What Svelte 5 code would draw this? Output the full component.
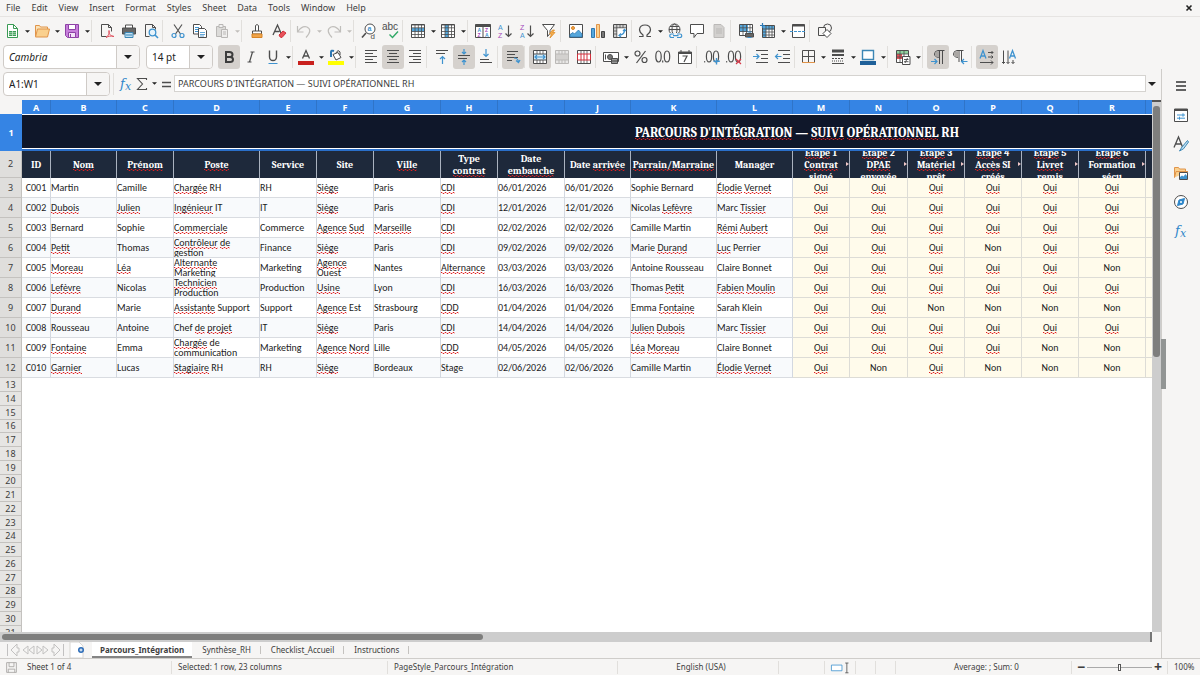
<script lang="ts">
	type Tool = { icon?: string; label?: string; arrow?: boolean; on?: boolean; off?: boolean; sep?: boolean; tight?: boolean };

	const menus = ['File', 'Edit', 'View', 'Insert', 'Format', 'Styles', 'Sheet', 'Data', 'Tools', 'Window', 'Help'];

	const icons: Record<string, string> = {
		newdoc: '<path d="M3.5 1.5h6l4 4v9h-10z" fill="#fff" stroke="#3a9b54"/><path d="M9.5 1.5v4h4" stroke="#3a9b54"/><path d="M5 8h7v5H5z" fill="#3a9b54" stroke="none"/><path d="M5 9.7h7M5 11.4h7M8.5 8v5" stroke="#cfe9d5" stroke-width=".7"/>',
		open: '<path d="M1.5 13V2.5h4l1 1.5h7V6" fill="#fbe3b8" stroke="#e0944a"/><path d="M3.5 6h12l-2 8h-12z" fill="#fad08e" stroke="#e0944a"/>',
		save: '<path d="M1.5 1.5h13v13h-11l-2-2z" fill="#c77fdb" stroke="#8e42a6"/><path d="M4.5 1.5h7v5h-7z" fill="#fff" stroke="#8e42a6"/><path d="M4.5 9.5h7v5h-7z" fill="#f3e3f7" stroke="#8e42a6"/><path d="M6.5 11v3" stroke="#8e42a6"/>',
		pdf: '<path d="M2.5 1.5h7l3 3v4M2.5 1.5v12h5M9.5 1.5v3h3"/><path d="M7 14.5c3-2 4-5 3-7-1 3 1 5 5 6-4-1-6 0-8 1z" stroke="#e0525f"/>',
		print: '<path d="M4.5 5V2h7v3" fill="#fff"/><path d="M1.5 5h13v6h-13z" fill="#666" stroke="#4d4d4d"/><path d="M4 9.5h8v5H4z" fill="#bfe0f3" stroke="#3c87b5"/><path d="M5 12h6" stroke="#3c87b5"/>',
		preview: '<path d="M2.5 1.5h7l3 3v2M2.5 1.5v12h4M9.5 1.5v3h3"/><circle cx="9.5" cy="9.5" r="3.3" fill="#e6f3fb" stroke="#3f93cf" stroke-width="1.3"/><path d="M12 12l3 3" stroke="#3f93cf" stroke-width="1.6"/>',
		cut: '<path d="M4 1.5l6.5 9.5M12 1.5L5.5 11" stroke="#555" stroke-width="1.2"/><circle cx="4" cy="12.5" r="2" stroke="#3f93cf" stroke-width="1.2"/><circle cx="12" cy="12.5" r="2" stroke="#3f93cf" stroke-width="1.2"/>',
		copy: '<path d="M1.5 1.5h6l2 2v7.5h-8z" fill="#fff"/><path d="M3 4.5h4M3 6.5h3M3 8.500h3" stroke="#3f93cf"/><path d="M6.5 5.5h6l2 2v7h-8z" fill="#fff"/><path d="M8 9.5h5M8 11.5h5M8 13h4" stroke="#3f93cf" stroke-width=".8"/>',
		paste: '<g stroke="#b9b7b5"><path d="M2.5 3.5h9v10h-9z" fill="#dcdbd9"/><path d="M5 1.5h4v3H5z" fill="#f0f0f0"/><path d="M7.5 6.5h6v8h-6z" fill="#efeeed"/><path d="M9 9h3M9 11h3"/></g>',
		brush: '<path d="M6.5 8V2.5q1.5-2 3 0V8" fill="#fff"/><path d="M3.5 8h9v3h-9z" fill="#fff"/><path d="M3 11h10v3.5H3z" fill="#f0a44a" stroke="#d88527"/>',
		clear: '<path d="M2 12L6.5 2l3.5 8M3.5 8.5h5" stroke-width="1.3"/><path d="M8 12l4-4 3 2-4 4.500q-2 .5-3-2.500z" fill="#e8525a" stroke="#d1303c"/>',
		undo: '<path d="M1.5 3v6h6M2 8.500q4-6 9-4.500 6 3-1 10.500" stroke="#c0bebb" stroke-width="1.2"/>',
		redo: '<path d="M14.5 3v6h-6M14 8.500q-4-6-9-4.500-6 3 1 10.500" stroke="#c0bebb" stroke-width="1.2"/>',
		find: '<circle cx="9" cy="6" r="5" fill="#fff"/><path d="M5 10l-4 4.5" stroke-width="1.6"/><text x="6.5" y="8" font-size="7" font-weight="700" fill="#3f93cf" stroke="none">a</text><text x="9.500" y="15.5" font-size="8" fill="#4d4d4d" stroke="none">d</text>',
		spell: '<text x="-1" y="7" font-size="10" fill="#4d4d4d" stroke="none">abc</text><path d="M6.5 11.5l3 3 5.500-6" stroke="#2fa866" stroke-width="1.4"/>',
		row: '<path d="M1.5 1.5h13v13h-13z" fill="#fff"/><path d="M2 5h12v3.5H2z" fill="#55a7dc" stroke="none"/><path d="M1.5 2h13M1.5 4.8h13M1.5 8.5h13M1.5 11.5h13M5 1.5v13M8.3 1.5v13M11.5 1.5v13" stroke-width=".8"/>',
		col: '<path d="M1.5 1.5h13v13h-13z" fill="#fff"/><path d="M5 2h3.5v12H5z" fill="#55a7dc" stroke="none"/><path d="M1.5 2h13M1.5 4.8h13M1.5 8.5h13M1.5 11.5h13M5 1.5v13M8.3 1.5v13M11.5 1.5v13" stroke-width=".8"/>',
		sort: '<path d="M.5 1.5h15v13H.5z" fill="#fff"/><path d="M.5 2h15v1.500H.5z" fill="#555"/><path d="M8 4v10.5"/><g font-size="5" font-weight="700" stroke="none"><text x="2.500" y="8.500" fill="#3f93cf">A</text><text x="2.500" y="13.800" fill="#a347ba">Z</text><text x="10" y="8.500" fill="#a347ba">Z</text><text x="10" y="13.800" fill="#3f93cf">A</text></g>',
		sortasc: '<g font-size="7" stroke="none"><text x="1" y="6.500" fill="#3f93cf">A</text><text x="1" y="15" fill="#a347ba">Z</text></g><path d="M11.5 2.500v11M8.5 10.500l3 3 3-3" stroke-width="1.2"/>',
		sortdesc: '<g font-size="7" stroke="none"><text x="1" y="6.500" fill="#a347ba">Z</text><text x="1" y="15" fill="#3f93cf">A</text></g><path d="M11.5 2.500v11M8.5 10.500l3 3 3-3" stroke-width="1.2"/>',
		filter: '<path d="M1.5 1.5h12L9 7.5v3l-2.500 3v-6z" fill="#fff"/><path d="M11.500 7L8.5 11h2l-1.500 4 5-5.500h-2.500l2-2.500z" fill="#f5b04f" stroke="#df8d2a" stroke-width=".8"/>',
		image: '<path d="M1.5 1.5h13v13h-13z" fill="#fff"/><circle cx="5" cy="5" r="1.5" fill="#f0a44a" stroke="#d88527"/><path d="M2 14v-2.500l3-2 1.500 1.500 4-4L14 11v3z" fill="#55a7dc" stroke="#2e78b3" stroke-width=".8"/>',
		chart: '<path d="M1.5 5.5h3v9h-3z" fill="#55a7dc" stroke="#2e78b3"/><path d="M6.5 1.5h3v13h-3z" fill="#fad08e" stroke="#e0944a"/><path d="M11.5 8.5h3v6h-3z" fill="#777" stroke="#444"/>',
		pivot: '<path d="M1.5 1.5h13v13h-13z" fill="#fff"/><path d="M2 2h12v3H2zM2 5h3v9H2z" fill="#cfcfcf" stroke="none"/><path d="M1.5 4.8h13M4.8 1.5v13M8 2v3M11 2v3M2 8h3M2 11h3" stroke-width=".8"/><path d="M12.500 6.500q.5 5-5.500 6M11 8l1.500-1.700L14 8M9 10.500l-2 2 2 1.500" stroke="#3f93cf" stroke-width="1.2"/>',
		omega: '<path d="M2 13.5h4V12Q2.500 9.500 2.500 6.500 3 2 8 2t5.500 4.500Q13.500 9.500 10 12v1.500h4" stroke-width="1.2"/>',
		link: '<circle cx="7.5" cy="6.5" r="5.5"/><ellipse cx="7.5" cy="6.5" rx="2.5" ry="5.5"/><path d="M2 6.500h11M3 3.500h9"/><path d="M2 10h13v5H2z" fill="#f6f5f4" stroke="none"/><path d="M7 11H4.500a1.700 1.700 0 000 3.500H7M10 11h3a1.700 1.700 0 010 3.500h-3M6 12.700h5.500" stroke="#3f93cf" stroke-width="1.2"/>',
		comment: '<path d="M1.5 1.500h13v9H8L5 14.500v-4H1.500z" fill="#fff"/>',
		header: '<path d="M3 1.500h7l3 3v10H3z" fill="#d3d1cf" stroke="#bbb9b7"/><path d="M5 6h6M5 8h6M5 10h6" stroke="#bbb9b7"/>',
		printarea: '<path d="M1.5 1.5h13v11h-13z" fill="#fff"/><path d="M2 2h8v7H2z" fill="#55a7dc" stroke="none"/><path d="M1.5 4.8h13M1.5 8.5h13M5 1.5v11M8.5 1.5v11M12 1.5v11" stroke-width=".8"/><path d="M7.5 10.5h8v3.500h-8z" fill="#666"/><path d="M9.500 9h4M9.500 14.500h4" stroke="#3f93cf"/>',
		freeze: '<path d="M2.5 2.5h12v12h-12z" fill="#fff"/><path d="M3 3h11v3.500H6V14H3z" fill="#55a7dc" stroke="none"/><path d="M2.5 6h12M2.5 9h12M2.5 12h12M6 2.5v12M9 2.5v12M12 2.5v12" stroke-width=".8"/><path d="M2.5 0v5M0 2.500h5" stroke="#2e78b3" stroke-width="1.2"/>',
		split: '<path d="M2.5 1.5h12v13h-12z" fill="#fff"/><path d="M2.5 2.5h12" stroke-width="2"/><path d="M0 8.500h16" stroke="#3f93cf" stroke-dasharray="3 1"/>',
		shapes: '<circle cx="10.500" cy="5" r="4"/><path d="M1.5 4.500h7v8h-7z" fill="#f6f5f4"/><path d="M10 6.500l4 4-4 4-4-4z" fill="#fff"/>',
		bold: '<path d="M5 3h3.500q3 0 3 2.500T8.500 8H5zM5 8h4q3 0 3 2.500T9 13H5z" stroke="#3d3d3d" stroke-width="2"/>',
		italic: '<path d="M7.500 3h4M4.500 13h4M9.500 3l-3 10" stroke-width="1.2"/>',
		underline: '<path d="M4.500 1.500V8q.2 3.500 3.500 3.500T11.500 8V1.500" stroke-width="1.4"/><path d="M3.500 14.500h9" stroke="#3f93cf"/>',
		fontcolor: '<path d="M4.500 9.500L8 1.500l3.500 8M5.700 7h4.600" stroke-width="1.3"/><path d="M0 12h16v4H0z" fill="#c9211e" stroke="none"/>',
		highlight: '<path d="M3 8V3q0-2 3-1" stroke="#2e78b3" stroke-width="2"/><path d="M5 5.500l5-2 3 5-5 2.500z" fill="#fff"/><path d="M8 4q2-4 4-1v3"/><path d="M0 12h16v4H0z" fill="#ffff00" stroke="none"/>',
		left: '<path d="M2 1.500h12M2 4.500h8M2 7.500h12M2 10.500h8M2 13.500h12"/>',
		center: '<path d="M2 1.500h12M4 4.500h8M2 7.500h12M4 10.500h8M2 13.500h12"/>',
		right: '<path d="M2 1.500h12M6 4.500h8M2 7.500h12M6 10.500h8M2 13.500h12"/>',
		top: '<path d="M2 1.500h12M2 4.500h9"/><path d="M8.500 15V7.500M6 10l2.500-2.500L11 10" stroke="#3f93cf" stroke-width="1.2"/>',
		middle: '<path d="M2 6.500h12M2 9.500h9"/><path d="M8 0v5M6 3l2 2 2-2M8 16v-5M6 13l2-2 2 2" stroke="#3f93cf" stroke-width="1.2"/>',
		bottom: '<path d="M2 10.500h9M2 13.500h12"/><path d="M8 0v7.500M5.500 5L8 7.500 10.500 5" stroke="#3f93cf" stroke-width="1.2"/>',
		wrap: '<path d="M2 2.500h11M2 5.500h8M2 8.500h11M2 11.500h5"/><path d="M9 9q4 0 4.500 4M11 11.500l2.500 2 1.500-2.500" stroke="#3f93cf" stroke-width="1.2"/>',
		merge: '<path d="M1.5 1.5h13v13h-13z" fill="#fff"/><path d="M1.5 5h13v6h-13z" fill="#d6ecf9" stroke="#4d4d4d"/><path d="M5 1.5V5M8 1.5V5M11 1.5V5M5 11v3.500M8 11v3.500M11 11v3.500" stroke-width=".8"/><path d="M3 8h10M5 6L3 8l2 2M11 6l2 2-2 2" stroke="#3f93cf" stroke-width="1.2"/>',
		mergeoff: '<g stroke="#bbb9b7"><path d="M1.5 1.5h13v13h-13z" fill="#e9e8e7"/><path d="M1.5 5h13v6h-13z" fill="#d3d1cf"/><path d="M5 1.5V5M8 1.5V5M11 1.5V5M5 11v3.500M8 11v3.500M11 11v3.500"/></g>',
		unmerge: '<path d="M1.5 1.5h13v13h-13z" fill="#fff"/><path d="M5 1.5V5M8 1.5V5M11 1.5V5M5 11v3.500M8 11v3.500M11 11v3.500" stroke-width=".8"/><path d="M1.5 5h13v6h-13zM5 5v6M8 5v6M11 5v6" fill="#fff" stroke="#d1303c"/>',
		currency: '<path d="M.5 3.500h15v9H.5z" fill="#fff"/><circle cx="7" cy="8" r="2.500" fill="#777"/><path d="M2.500 5.500v5M8.500 9.500h6v5h-6zM8.500 12h6" fill="#999"/>',
		percent: '<circle cx="4.500" cy="4.500" r="2.500" stroke-width="1.2"/><circle cx="11.500" cy="11" r="2.500" stroke-width="1.2"/><path d="M12.500 2l-9 12" stroke-width="1.2"/>',
		number: '<ellipse cx="3.500" cy="7.500" rx="2.700" ry="5.500" stroke-width="1.2"/><ellipse cx="12" cy="7.500" rx="2.700" ry="5.500" stroke-width="1.2"/><path d="M7.700 11.500v2" stroke-width="1.2"/>',
		date: '<path d="M1.5 3h13v11.500h-13z" fill="#fff"/><path d="M1.5 4h13" stroke-width="2"/><path d="M4 1v3M12 1v3"/><path d="M5.500 7h4.500l-3 6" stroke-width="1.2"/>',
		adddec: '<path d="M.7 12v1.500"/><ellipse cx="5" cy="7.500" rx="2.600" ry="5.500" stroke-width="1.2"/><ellipse cx="12" cy="7.500" rx="2.600" ry="5.500" stroke-width="1.2"/><path d="M12.500 9v6.500M9.500 12.200h6.300" stroke="#3f93cf" stroke-width="1.4"/>',
		deldec: '<path d="M.7 12v1.500"/><ellipse cx="5" cy="7.500" rx="2.600" ry="5.500" stroke-width="1.2"/><ellipse cx="12" cy="7.500" rx="2.600" ry="5.500" stroke-width="1.2"/><path d="M10 10l5 5M15 10l-5 5" stroke="#d83a4a" stroke-width="1.2"/>',
		indent: '<path d="M3 1.500h12M8 5.500h7M8 9.500h7M3 13.500h12"/><path d="M0 7.500h6M3.500 5L6 7.500 3.500 10" stroke="#3f93cf" stroke-width="1.2"/>',
		outdent: '<path d="M3 1.500h12M8 5.500h7M8 9.500h7M3 13.500h12"/><path d="M.5 7.500h6M3 5L.5 7.500 3 10" stroke="#3f93cf" stroke-width="1.2"/>',
		borders: '<path d="M2.500 13.500v-12h12v12M8.500 1.500v12M2.500 7.500h12"/><path d="M2 13.500h13" stroke="#e0944a"/>',
		linestyle: '<path d="M2 2h12" stroke-width="3"/><path d="M2 6h12" stroke-width="2"/><path d="M2 9.500h12" stroke-dasharray="2 1"/><path d="M2 12h12" stroke-dasharray="1 1"/><path d="M2 14.500h12"/>',
		bordercolor: '<path d="M2.500 1.500h11v9h-11z" fill="#fff" stroke="#3c87b5" stroke-width="1.4"/><path d="M0 12h16v4H0z" fill="#1f6099" stroke="none"/>',
		cond: '<path d="M1.5 1.5h12v12h-12z" fill="#fff"/><path d="M2 2h11v3H2z" fill="#8fd19e" stroke="none"/><path d="M2 5h5v5H2z" fill="#e8525a" stroke="none"/><path d="M1.5 5h12M1.5 8h12M5 1.5v12M9 1.5v12" stroke-width=".8"/><path d="M7.5 7.5h7.500v8H7.500z" fill="#fff"/><path d="M9 10.500h4.500M9 12.700h4.500M12.500 9l-2.500 5" stroke-width=".9"/>',
		ltr: '<path d="M9.500 15V1.500M12.500 15V1.500M14.500 1.500H8Q4.500 2 4.500 5T9 8.500"/><path d="M9 2Q5 2 5 5t4 3.500z" fill="#a9a6a3" stroke="none"/><path d="M1 12.500h6M4.500 10L7 12.500 4.500 15" stroke="#3f93cf" stroke-width="1.2"/>',
		rtl: '<path d="M7 13V1.500M9.500 13V1.500M11.500 1.500H5Q1.500 2 1.500 5T6 8.500"/><path d="M7 2Q2 2 2 5t5 3.500z" fill="#a9a6a3" stroke="none"/><path d="M15.500 12.500h-6M12 10l-2.500 2.500L12 15" stroke="#3f93cf" stroke-width="1.2"/>',
		horiz: '<path d="M1 9.500L4 1.500l3 8M2 7h4" stroke="#3f93cf" stroke-width="1.3"/><path d="M9 3.500h5M12.500 2L14 3.500 12.500 5M9 8h5M12.500 6.500L14 8l-1.500 1.500M1 13.500h13M12 11.500l2 2-2 2"/>',
		vert: '<path d="M8.500 9.500l3-8 3 8M9.500 7h4" stroke="#3f93cf" stroke-width="1.3"/><path d="M2.500 1.500v13M1 13l1.500 1.500L4 13M7 1.500v13M5.500 13L7 14.500 8.500 13M12 11v3.500M10.500 13l1.500 1.500 1.500-1.500"/>',
		fx: '<g font-family="DejaVu Serif, serif" font-style="italic" fill="#2e86c9" stroke="none"><text x="2" y="12" font-size="13">f</text><text x="7" y="14" font-size="11">x</text></g>',
		sum: '<path d="M12.500 4V2.500h-9L8.500 8l-5 5.500h9V12" stroke-width="1.1"/>',
		equals: '<path d="M4 6.500h9M4 10.500h9" stroke-width="1.6"/>',
		menu: '<path d="M3 4h10M3 8h10M3 12h10" stroke="#333" stroke-width="1.5"/>',
		properties: '<path d="M1.5 2h13v12.500h-13z" fill="#fff"/><path d="M1.5 3h13" stroke-width="2"/><path d="M4 8h8M10 6.300v3.400M4 11.200h8M6.500 9.700v3" stroke="#3f93cf"/>',
		styles: '<path d="M1 11.500L5.500 1l4 10M2.500 8h6" stroke-width="1.3"/><path d="M14.500 4.500L9 11l-2.500 4 4-2.200 5-6.800z" fill="#bfe0f3" stroke="#3c87b5"/>',
		gallery: '<path d="M1.5 12.500v-10h4l1 1.500h6V6M1.5 12.500l1.500-6h12" fill="#fad08e" stroke="#e0944a"/><path d="M6.500 7.500h8v7h-8z" fill="#fff"/><path d="M7 14v-2l2-1.500 1.500 1L12.500 9l1.500 2v3z" fill="#3f93cf" stroke="none"/>',
		navigator: '<circle cx="8" cy="8" r="6.500" fill="#fff"/><path d="M11.500 4.500L10 10l-5.500 1.500L6 6z" fill="#2e86c9" stroke="#2e86c9"/><circle cx="8" cy="8" r="1" fill="#fff" stroke="none"/>',
		first: '<path d="M2.500 2v12M12 2L6 8l6 6v-4h2V6h-2z"/>',
		prev: '<path d="M8 4L3 8l5 4zM14 4L9 8l5 4z"/>',
		next: '<path d="M2 4l5 4-5 4zM8 4l5 4-5 4z"/>',
		last: '<path d="M13.500 2v12M4 2l6 6-6 6v-4H2V6h2z"/>',
		addsheet: '<path d="M-1 0h9l4 4v12H-1z" fill="#fff" stroke="#d8d6d3"/><circle cx="10" cy="8" r="3" fill="#2b6cb8" stroke="none"/><path d="M10 6.500v3M8.500 8h3" stroke="#fff"/>',
		doc: '<path d="M2 2h12v12H2zM5 2v5h6V2M4 14v-4h8v4" stroke="#a3a19f"/>',
		selmode: '<path d="M.5 5h13v7H.5z" fill="#fff" stroke="#3f93cf"/><path d="M19.500 2.500v12M17.500 2.500h4M17.500 14.500h4"/>'
	};

	const sep: Tool = { sep: true };
	const tightSep: Tool = { sep: true, tight: true };

	const standard: Tool[] = [
		{ icon: 'newdoc', label: 'New', arrow: true },
		{ icon: 'open', label: 'Open', arrow: true },
		{ icon: 'save', label: 'Save', arrow: true },
		sep,
		{ icon: 'pdf', label: 'Export as PDF' },
		{ icon: 'print', label: 'Print' },
		{ icon: 'preview', label: 'Print Preview' },
		sep,
		{ icon: 'cut', label: 'Cut' },
		{ icon: 'copy', label: 'Copy' },
		{ icon: 'paste', label: 'Paste', arrow: true, off: true },
		sep,
		{ icon: 'brush', label: 'Clone Formatting' },
		{ icon: 'clear', label: 'Clear Formatting' },
		tightSep,
		{ icon: 'undo', label: 'Undo', arrow: true, off: true },
		{ icon: 'redo', label: 'Redo', arrow: true, off: true },
		sep,
		{ icon: 'find', label: 'Find and Replace' },
		{ icon: 'spell', label: 'Spelling' },
		sep,
		{ icon: 'row', label: 'Row', arrow: true },
		{ icon: 'col', label: 'Column', arrow: true },
		sep,
		{ icon: 'sort', label: 'Sort' },
		{ icon: 'sortasc', label: 'Sort Ascending' },
		{ icon: 'sortdesc', label: 'Sort Descending' },
		{ icon: 'filter', label: 'AutoFilter' },
		sep,
		{ icon: 'image', label: 'Image' },
		{ icon: 'chart', label: 'Chart' },
		{ icon: 'pivot', label: 'Pivot Table' },
		tightSep,
		{ icon: 'omega', label: 'Special Character', arrow: true },
		{ icon: 'link', label: 'Hyperlink' },
		{ icon: 'comment', label: 'Comment' },
		{ icon: 'header', label: 'Headers and Footers', off: true },
		sep,
		{ icon: 'printarea', label: 'Print Area' },
		{ icon: 'freeze', label: 'Freeze Rows and Columns', arrow: true },
		{ icon: 'split', label: 'Split Window' },
		sep,
		{ icon: 'shapes', label: 'Draw Functions' }
	];

	const formatting: Tool[] = [
		{ icon: 'bold', label: 'Bold', on: true },
		{ icon: 'italic', label: 'Italic' },
		{ icon: 'underline', label: 'Underline', arrow: true },
		tightSep,
		{ icon: 'fontcolor', label: 'Font Color', arrow: true },
		{ icon: 'highlight', label: 'Background Color', arrow: true },
		sep,
		{ icon: 'left', label: 'Align Left' },
		{ icon: 'center', label: 'Center Horizontally', on: true },
		{ icon: 'right', label: 'Align Right' },
		sep,
		{ icon: 'top', label: 'Align Top' },
		{ icon: 'middle', label: 'Center Vertically', on: true },
		{ icon: 'bottom', label: 'Align Bottom' },
		sep,
		{ icon: 'wrap', label: 'Wrap Text', on: true },
		sep,
		{ icon: 'merge', label: 'Merge and Center', on: true },
		{ icon: 'mergeoff', label: 'Merge Cells', off: true },
		{ icon: 'unmerge', label: 'Unmerge Cells' },
		sep,
		{ icon: 'currency', label: 'Currency', arrow: true },
		{ icon: 'percent', label: 'Percent' },
		{ icon: 'number', label: 'Number' },
		{ icon: 'date', label: 'Date' },
		sep,
		{ icon: 'adddec', label: 'Add Decimal Place' },
		{ icon: 'deldec', label: 'Delete Decimal Place' },
		sep,
		{ icon: 'indent', label: 'Increase Indent' },
		{ icon: 'outdent', label: 'Decrease Indent' },
		tightSep,
		{ icon: 'borders', label: 'Borders', arrow: true },
		{ icon: 'linestyle', label: 'Border Style', arrow: true },
		{ icon: 'bordercolor', label: 'Border Color', arrow: true },
		sep,
		{ icon: 'cond', label: 'Conditional', arrow: true },
		sep,
		{ icon: 'ltr', label: 'Left-To-Right', on: true },
		{ icon: 'rtl', label: 'Right-To-Left' },
		sep,
		{ icon: 'horiz', label: 'Text direction left to right', on: true },
		{ icon: 'vert', label: 'Text direction top to bottom' }
	];

	const panels = ['menu', 'properties', 'styles', 'gallery', 'navigator', 'fx'];

	// words followed by ~ are flagged by the spell checker
	const columns = [
		{ letter: 'A', width: 29, title: 'ID' },
		{ letter: 'B', width: 66, title: 'Nom~' },
		{ letter: 'C', width: 57, title: 'Prénom~' },
		{ letter: 'D', width: 86, title: 'Poste~' },
		{ letter: 'E', width: 57, title: 'Service' },
		{ letter: 'F', width: 57, title: 'Site' },
		{ letter: 'G', width: 67, title: 'Ville~' },
		{ letter: 'H', width: 57, title: 'Type contrat~' },
		{ letter: 'I', width: 67, title: 'Date embauche~' },
		{ letter: 'J', width: 66, title: 'Date arrivée~' },
		{ letter: 'K', width: 86, title: 'Parrain/Marraine~' },
		{ letter: 'L', width: 76, title: 'Manager' },
		{ letter: 'M', width: 57, title: 'Étape~ 1|Contrat~|signé~', step: true },
		{ letter: 'N', width: 58, title: 'Étape~ 2|DPAE~|envoyée~', step: true },
		{ letter: 'O', width: 57, title: 'Étape~ 3|Matériel~|prêt~', step: true },
		{ letter: 'P', width: 57, title: 'Étape~ 4|Accès~ SI|créés~', step: true },
		{ letter: 'Q', width: 57, title: 'Étape~ 5|Livret~|remis~', step: true },
		{ letter: 'R', width: 67, title: 'Étape~ 6|Formation|sécu~', step: true },
		{ letter: '', width: 426, title: '' }
	];
	const tableWidth = columns.reduce((sum, c) => sum + c.width, 22);

	const people = [
		['C001', 'Martin', 'Camille', 'Chargée~ RH', 'RH', 'Siège~', 'Paris', 'CDI~', '06/01/2026', 'Sophie Bernard', 'Élodie~ Vernet~', 'OOOOOO'],
		['C002', 'Dubois~', 'Julien~', 'Ingénieur~ IT', 'IT', 'Siège~', 'Paris', 'CDI~', '12/01/2026', 'Nicolas Lefèvre~', 'Marc Tissier~', 'OOOOOO'],
		['C003', 'Bernard', 'Sophie', 'Commerciale~', 'Commerce', 'Agence~ Sud~', 'Marseille~', 'CDI~', '02/02/2026', 'Camille Martin', 'Rémi~ Aubert~', 'OOOOOO'],
		['C004', 'Petit~', 'Thomas', 'Contrôleur~ de~ gestion~', 'Finance', 'Siège~', 'Paris', 'CDI~', '09/02/2026', 'Marie Durand~', 'Luc~ Perrier', 'OOONOO'],
		['C005', 'Moreau~', 'Léa~', 'Alternante~ Marketing', 'Marketing', 'Agence~ Ouest~', 'Nantes', 'Alternance~', '03/03/2026', 'Antoine Rousseau', 'Claire Bonnet', 'OOOOON'],
		['C006', 'Lefèvre~', 'Nicolas', 'Technicien~ Production', 'Production', 'Usine~', 'Lyon', 'CDI~', '16/03/2026', 'Thomas Petit~', 'Fabien~ Moulin~', 'OOOOOO'],
		['C007', 'Durand~', 'Marie', 'Assistante~ Support', 'Support', 'Agence~ Est', 'Strasbourg', 'CDD~', '01/04/2026', 'Emma Fontaine~', 'Sarah Klein', 'OONNNN'],
		['C008', 'Rousseau', 'Antoine', 'Chef de~ projet~', 'IT', 'Siège~', 'Paris', 'CDI~', '14/04/2026', 'Julien~ Dubois~', 'Marc Tissier~', 'OOOOOO'],
		['C009', 'Fontaine~', 'Emma', 'Chargée~ de communication', 'Marketing', 'Agence~ Nord~', 'Lille', 'CDD~', '04/05/2026', 'Léa~ Moreau~', 'Claire Bonnet', 'OOOONN'],
		['C010', 'Garnier~', 'Lucas', 'Stagiaire~ RH', 'RH', 'Siège~', 'Bordeaux', 'Stage', '02/06/2026', 'Camille Martin', 'Élodie~ Vernet~', 'ONONNN']
	];

	const rows = people.map((p) => [
		...p.slice(0, 9),
		p[8],
		p[9],
		p[10],
		...[...p[11]].map((s) => (s === 'O' ? 'Oui~' : 'Non')),
		''
	]);

	const emptyRows = Array.from({ length: 19 }, (_, i) => i + 13);
	const tabs = ['Parcours_Intégration', 'Synthèse_RH', 'Checklist_Accueil', 'Instructions'];

	let activeTab = $state(0);
	let zoom = $state(50);

	function words(text: string) {
		return text.split(' ').map((w) => ({ text: w.replace('~', ''), bad: w.endsWith('~') }));
	}
</script>

{#snippet icon(name: string)}
	<svg class="icon" viewBox="0 0 16 16" fill="none" stroke="#4d4d4d" aria-hidden="true">{@html icons[name]}</svg>
{/snippet}

{#snippet arrow()}
	<svg class="caret" viewBox="0 0 8 4" aria-hidden="true"><path d="M0 0h8L4 4z" fill="currentColor" /></svg>
{/snippet}

{#snippet spelled(text: string)}
	{#each words(text) as w, i}{i ? ' ' : ''}<span class:bad={w.bad}>{w.text}</span>{/each}
{/snippet}

{#snippet tools(list: Tool[])}
	{#each list as t}
		{#if t.sep}
			<span class="sep" class:tight={t.tight}></span>
		{:else}
			<button class="tool" class:on={t.on} disabled={t.off} aria-label={t.label}>{@render icon(t.icon ?? '')}</button>
			{#if t.arrow}
				<button class="drop" disabled={t.off} aria-label="{t.label} options">{@render arrow()}</button>
			{/if}
		{/if}
	{/each}
{/snippet}

<div class="window">
	<nav class="menubar">
		{#each menus as m}
			<button>{m}</button>
		{/each}
		<button class="close" aria-label="Close document">
			<svg viewBox="0 0 8 8"><path d="M1.5 1.5l5 5M6.5 1.5l-5 5" stroke="#222" stroke-width="1.6" /></svg>
		</button>
	</nav>

	<div class="toolbar">{@render tools(standard)}</div>

	<div class="toolbar formatting">
		<div class="combo font">
			<input aria-label="Font name" value="Cambria" />
			<button aria-label="Choose font">{@render arrow()}</button>
		</div>
		<div class="combo size">
			<input aria-label="Font size" value="14 pt" />
			<button aria-label="Choose size">{@render arrow()}</button>
		</div>
		{@render tools(formatting)}
	</div>

	<div class="body">
		<div class="main">
			<div class="formula">
				<div class="combo name">
					<input aria-label="Name box" value="A1:W1" />
					<button aria-label="Manage names">{@render arrow()}</button>
				</div>
				<span class="sep"></span>
				<button class="fn" aria-label="Function wizard">{@render icon('fx')}</button>
				<button class="fn" aria-label="Select function">{@render icon('sum')}</button>
				<button class="drop" aria-label="Select function options">{@render arrow()}</button>
				<button class="fn" aria-label="Formula">{@render icon('equals')}</button>
				<input class="line" aria-label="Input line" value="PARCOURS D'INTÉGRATION — SUIVI OPÉRATIONNEL RH" />
				<button class="expand" aria-label="Expand formula bar">{@render arrow()}</button>
			</div>

			<div class="grid">
				<div class="sheet">
					<table style="width: {tableWidth}px">
						<colgroup>
							<col style="width: 22px" />
							{#each columns as c}
								<col style="width: {c.width}px" />
							{/each}
						</colgroup>
						<thead>
							<tr>
								<td class="corner"></td>
								{#each columns as c}
									<th class="letter">{c.letter}</th>
								{/each}
							</tr>
						</thead>
						<tbody>
							<tr class="title">
								<th class="num selected">1</th>
								<td colspan={columns.length}>
									{@render spelled("PARCOURS~ D'INTÉGRATION~ — SUIVI~ OPÉRATIONNEL~ RH")}
								</td>
							</tr>
							<tr class="heads">
								<th class="num">2</th>
								{#each columns as c}
									<td>
										<div class="clip">
											{#if c.step}
												{#each c.title.split('|') as part}
													<div>{@render spelled(part)}</div>
												{/each}
											{:else}
												<div>{@render spelled(c.title)}</div>
											{/if}
										</div>
										{#if c.step}<i class="more"></i>{/if}
									</td>
								{/each}
							</tr>
							{#each rows as r, i}
								<tr class="person">
									<th class="num">{i + 3}</th>
									{#each r as value, j}
										<td class:step={j > 11} class:id={j === 0}>
											<div class="clip"><div>{@render spelled(value)}</div></div>
										</td>
									{/each}
								</tr>
							{/each}
							{#each emptyRows as n}
								<tr class="empty">
									<th class="num">{n}</th>
								</tr>
							{/each}
						</tbody>
					</table>
				</div>
				<div class="vscroll"><div class="thumb"></div></div>
			</div>

			<div class="hscroll"><div class="thumb"></div></div>

			<div class="tabs">
				<div class="tabnav">
					{#each ['first', 'prev', 'next', 'last'] as n}
						<button disabled aria-label="{n} sheet">{@render icon(n)}</button>
					{/each}
				</div>
				<button class="add" aria-label="Add sheet">{@render icon('addsheet')}</button>
				{#each tabs as t, i}
					<button class="tab" class:active={i === activeTab} onclick={() => (activeTab = i)}>{t}</button>
				{/each}
			</div>
		</div>

		<aside class="sidebar">
			<span class="handle"></span>
			{#each panels as p}
				<button aria-label={p}>{@render icon(p)}</button>
			{/each}
		</aside>
	</div>

	<footer class="status">
		<span class="pad">{@render icon('doc')}</span>
		<span>Sheet 1 of 4</span>
		<span class="rule">Selected: 1 row, 23 columns</span>
		<span class="rule">PageStyle_Parcours_Intégration</span>
		<span class="rule mid">English (USA)</span>
		<span class="rule"></span>
		<span class="rule mode">{@render icon('selmode')}</span>
		<span class="rule"></span>
		<span class="rule"></span>
		<span class="rule mid">Average: ; Sum: 0</span>
		<span class="rule zoom">
			<button aria-label="Zoom out">−</button>
			<input type="range" aria-label="Zoom" min="0" max="100" bind:value={zoom} />
			<button aria-label="Zoom in">+</button>
		</span>
		<span class="rule">100%</span>
	</footer>
</div>

<style>
	:global(body) {
		background: #f6f5f4;
	}
	.window {
		display: flex;
		flex-direction: column;
		height: 100vh;
		overflow: hidden;
		background: #f6f5f4;
		color: #3d3d3d;
		font: 9px/14px 'Noto Sans', sans-serif;
	}
	.window * {
		box-sizing: border-box;
	}
	button,
	input {
		margin: 0;
		padding: 0;
		border: 0;
		background: none;
		color: inherit;
		font: inherit;
	}
	button {
		display: flex;
		align-items: center;
		justify-content: center;
	}
	.icon {
		width: 16px;
		height: 16px;
		flex: none;
		overflow: visible;
		font-family: 'Liberation Sans', sans-serif;
	}
	.caret {
		width: 5px;
		height: 3px;
		color: #222;
	}

	.menubar {
		display: flex;
		align-items: center;
		gap: 11px;
		height: 17px;
		padding: 0 7px 0 6px;
		border-bottom: 1px solid #e6e4e2;
	}
	.menubar .close {
		width: 8px;
		height: 8px;
		margin-left: auto;
	}

	.toolbar {
		display: flex;
		align-items: center;
		height: 28px;
		padding-left: 1px;
	}
	.formatting {
		height: 24px;
		padding-left: 3px;
	}
	.tool {
		width: 22px;
		height: 24px;
		flex: none;
		border-radius: 3px;
	}
	.tool.on {
		background: #d5d1cd;
	}
	.drop {
		width: 8px;
		height: 24px;
		flex: none;
	}
	.drop:disabled .caret {
		color: #c0bebb;
	}
	.sep {
		width: 5px;
		height: 22px;
		flex: none;
		border-left: 1px solid #e1dfdc;
	}
	.sep.tight {
		width: 3px;
	}

	.combo {
		display: flex;
		height: 24px;
		flex: none;
		border: 1px solid #cfcbc7;
		border-radius: 4px;
		background: #fff;
		color: #222;
		font-size: 10px;
	}
	.combo input {
		flex: 1;
		min-width: 0;
		padding-left: 5px;
	}
	.combo button {
		width: 23px;
		border-left: 1px solid #cfcbc7;
		border-radius: 0 3px 3px 0;
		background: #f6f5f4;
	}
	.combo .caret,
	.expand .caret {
		width: 8px;
		height: 4px;
	}
	.font {
		width: 137px;
		margin-right: 6px;
		font-style: italic;
	}
	.size {
		width: 67px;
		margin-right: 5px;
	}
	.name {
		width: 107px;
		margin-right: 3px;
	}

	.body {
		display: flex;
		flex: 1;
		min-height: 0;
	}
	.main {
		display: flex;
		flex: 1;
		flex-direction: column;
		min-width: 0;
	}
	.formula {
		display: flex;
		align-items: center;
		height: 31px;
		padding: 0 4px 2px 3px;
	}
	.fn {
		width: 16px;
		height: 22px;
		flex: none;
	}
	.line {
		flex: 1;
		height: 17px;
		min-width: 0;
		padding-left: 3px;
		border: 1px solid #d5d3d0;
		background: #fff;
	}
	.expand {
		width: 11px;
		height: 22px;
	}

	.grid {
		display: flex;
		flex: 1;
		min-height: 0;
	}
	.sheet {
		flex: 1;
		min-width: 0;
		overflow: hidden;
		background: #fff;
	}
	table {
		table-layout: fixed;
		border-spacing: 0;
	}
	td,
	th {
		padding: 0;
	}
	.corner {
		background: #f6f5f4;
	}
	.letter {
		height: 14px;
		border-right: 1px solid #2f74c8;
		background: #3584e4;
		color: #fff;
		font-weight: 700;
		line-height: 13px;
	}
	.num {
		border-right: 1px solid #c4c2bf;
		border-bottom: 1px solid #c4c2bf;
		background: #dfdedc;
		font-weight: 400;
		line-height: 12px;
	}
	.num.selected {
		border: 0;
		background: #3584e4;
		color: #fff;
		font-weight: 700;
	}
	.title {
		height: 37px;
	}
	.title td {
		border-top: 1px solid #fff;
		background: #0f172a;
		box-shadow: inset 0 -2px #2a6fc9, inset 0 -3px #fff;
		color: #fff;
		font: 700 13px/16px Caladea, 'DejaVu Serif Condensed', 'DejaVu Serif', serif;
		text-align: center;
	}
	.clip {
		display: flex;
		flex-direction: column;
		justify-content: center;
		overflow: hidden;
	}
	.heads td {
		position: relative;
		border-right: 1px solid #aab2bf;
		background: #1e293b;
		color: #fff;
		font: 700 10px/12px Caladea, 'DejaVu Serif Condensed', 'DejaVu Serif', serif;
		text-align: center;
	}
	.heads .clip {
		height: 27px;
	}
	.more {
		position: absolute;
		top: 11px;
		right: 0;
		border: 2px solid transparent;
		border-right: 0;
		border-left: 3px solid #f0c8c8;
	}
	.person td {
		border-right: 1px solid #d3d8e0;
		border-bottom: 1px solid #d9dce1;
		background: #fff;
		color: #1c1c1c;
		font: 10px/10px Carlito, Lato, sans-serif;
	}
	.person:nth-child(even) td {
		background: #f8fafc;
	}
	.person td.step {
		border-color: #dddcd6;
		background: #fffbeb;
		text-align: center;
	}
	.person .id {
		text-align: center;
	}
	.person .clip {
		height: 19px;
	}
	.bad {
		background: url("data:image/svg+xml,%3Csvg xmlns='http://www.w3.org/2000/svg' width='4' height='2'%3E%3Cpath d='M0 .5h1l1 1h1l1-1' fill='none' stroke='%23e02020'/%3E%3C/svg%3E") 0 100% repeat-x;
	}
	.empty {
		height: 14px;
	}
	.empty:nth-child(4n) {
		height: 13px;
	}
	.empty .num {
		background: #e6e5e3;
	}
	.thumb {
		border-radius: 3px;
		background: #7e7e7d;
	}
	.vscroll {
		width: 9px;
		padding: 4px 1px;
		border-top: 2px solid #555;
		background: #cdcdcd;
	}
	.vscroll .thumb {
		height: 48%;
	}
	.hscroll {
		height: 10px;
		margin-right: 9px;
		padding: 2px;
		border-right: 2px solid #777;
		background: #cdcdcd;
	}
	.hscroll .thumb {
		width: 42%;
		height: 6px;
		min-width: 20px;
	}

	.tabs {
		display: flex;
		height: 16px;
		font-size: 8px;
	}
	.tabnav {
		display: flex;
		padding-left: 5px;
	}
	.tabnav button {
		width: 15px;
		opacity: 0.3;
	}
	.add {
		width: 27px;
	}
	.tab {
		position: relative;
		padding: 0 10px;
	}
	.tab::after {
		position: absolute;
		top: 4px;
		right: 0;
		height: 8px;
		border-right: 1px solid #c4c2bf;
		content: '';
	}
	.tab.active {
		padding: 2px 8px 0;
		border-bottom: 2px solid #858585;
		background: #fff;
		font-weight: 700;
	}
	.tab.active::after {
		display: none;
	}

	.sidebar {
		position: relative;
		display: flex;
		flex-direction: column;
		align-items: center;
		gap: 5px;
		width: 39px;
		padding-top: 5px;
		border-left: 1px solid #cfcdca;
	}
	.sidebar button {
		width: 24px;
		height: 24px;
	}
	.handle {
		position: absolute;
		top: 270px;
		left: -1px;
		width: 5px;
		height: 50px;
		background: #929594;
	}

	.status {
		display: grid;
		grid-template-columns: 24px 147fr 216fr 230fr 161fr 46px 31px 20px 20px 176fr 96px 33px;
		align-items: center;
		height: 17px;
		border-top: 1px solid #cfcdca;
		font-size: 8px;
	}
	.status > span {
		display: flex;
		align-items: center;
		height: 13px;
		padding-left: 3px;
		white-space: nowrap;
	}
	.status .icon {
		width: 13px;
		height: 13px;
	}
	.status .rule {
		padding-left: 6px;
		border-left: 1px solid #e1dfdc;
	}
	.status .pad {
		padding-left: 5px;
	}
	.status .mid {
		justify-content: center;
	}
	.status .zoom {
		padding-left: 3px;
	}
	.zoom button {
		width: 12px;
		font-size: 14px;
		font-weight: 700;
	}
	.zoom input {
		appearance: none;
		width: 65px;
		height: 12px;
		background: linear-gradient(#aaa, #aaa) center / 100% 1px no-repeat;
	}
	.zoom input::-webkit-slider-thumb {
		appearance: none;
		width: 3px;
		height: 7px;
		border: 1px solid #555;
		background: #fff;
	}
</style>
